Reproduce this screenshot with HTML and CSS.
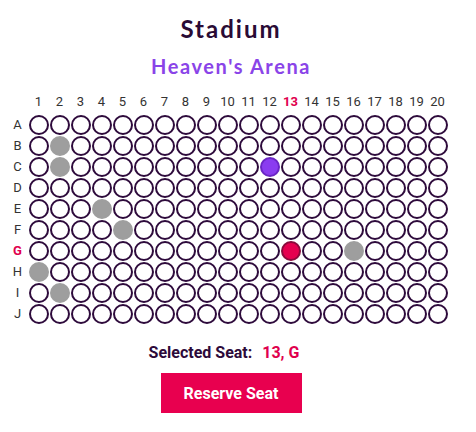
FILE: index.html
```html
<!DOCTYPE html>
<html lang="en">
<head>
    <meta charset="UTF-8">
    <meta name="viewport" content="width=device-width, initial-scale=1.0">
    <title>Stadium</title>
    <link rel="stylesheet" href="styles.css">
</head>
<body>
    <div id="container">
        <h1 class="title">Stadium</h1>
        <h2 class="arena">Heaven's Arena</h2>
        <div id="seatMap" class="seat-map"></div>
        <div class="selected">
            <span>Selected Seat:</span>
            <span id="selectedSeat" class="selected-value">13, G</span>
        </div>
        <button class="reserve">Reserve Seat</button>
    </div>

    <script>
        const rows = 'ABCDEFGHIJ'.split('');
        const taken = ['B2', 'C2', 'E4', 'F5', 'G16', 'H1', 'I2'];
        const held = ['C12'];
        const selected = { row: 'G', col: 13 };
        const map = document.getElementById('seatMap');

        let html = '<span class="corner"></span>';
        for (let c = 1; c <= 20; c++) {
            const cls = c === selected.col ? 'col-label active' : 'col-label';
            html += `<span class="${cls}">${c}</span>`;
        }
        rows.forEach(r => {
            const cls = r === selected.row ? 'row-label active' : 'row-label';
            html += `<span class="${cls}">${r}</span>`;
            for (let c = 1; c <= 20; c++) {
                const id = r + c;
                let seat = 'seat';
                if (taken.includes(id)) seat += ' taken';
                if (held.includes(id)) seat += ' held';
                if (r === selected.row && c === selected.col) seat += ' chosen';
                html += `<span class="cell"><span class="${seat}"></span></span>`;
            }
        });
        map.innerHTML = html;
    </script>
</body>
</html>
```

FILE: styles.css
```css
body {
    font-family: Roboto, "Liberation Sans", sans-serif;
    background-color: #fff;
    margin: 0;
    padding: 0;
}

#container {
    display: flex;
    flex-direction: column;
    align-items: center;
    padding: 14px 14px 0 0;
}

.title {
    font-family: Lato, "Open Sans", sans-serif;
    font-size: 24px;
    line-height: 30px;
    font-weight: 700;
    letter-spacing: 2px;
    color: #2a0b35;
    margin: 0;
}

.arena {
    font-family: Lato, "Open Sans", sans-serif;
    font-size: 20px;
    line-height: 26px;
    font-weight: 700;
    letter-spacing: 1.6px;
    color: #8a44e8;
    margin: 9px 0 14px;
}

.seat-map {
    display: grid;
    grid-template-columns: repeat(21, 21px);
    grid-auto-rows: 21px;
    padding-right: 7px;
}

.col-label,
.row-label {
    display: flex;
    align-items: center;
    justify-content: center;
    font-size: 13px;
    color: #333;
}

.col-label {
    align-items: flex-start;
    padding-top: 1px;
}

.active {
    color: #e0004d;
    font-weight: 700;
}

.cell {
    display: flex;
    align-items: center;
    justify-content: center;
}

.seat {
    width: 20px;
    height: 20px;
    box-sizing: border-box;
    border: 2px solid #2e0b3c;
    border-radius: 50%;
    background-color: #fff;
}

.seat.taken {
    background-color: #9e9e9e;
    border-color: #9e9e9e;
}

.seat.held {
    background-color: #8a3cf0;
    border-color: #6a25c4;
}

.seat.chosen {
    background-color: #e5004f;
    border-color: #8a0a3c;
}

.selected {
    margin-top: 19px;
    padding-right: 14px;
    font-size: 16px;
    line-height: 20px;
    font-weight: 700;
    color: #2d0a3a;
}

.selected-value {
    color: #e0004d;
    margin-left: 6px;
}

.reserve {
    margin-top: 10px;
    width: 141px;
    height: 40px;
    background-color: #e8004f;
    color: #fff;
    font-family: Roboto, "Liberation Sans", sans-serif;
    font-size: 16px;
    font-weight: 700;
    border: none;
    cursor: pointer;
}
```
